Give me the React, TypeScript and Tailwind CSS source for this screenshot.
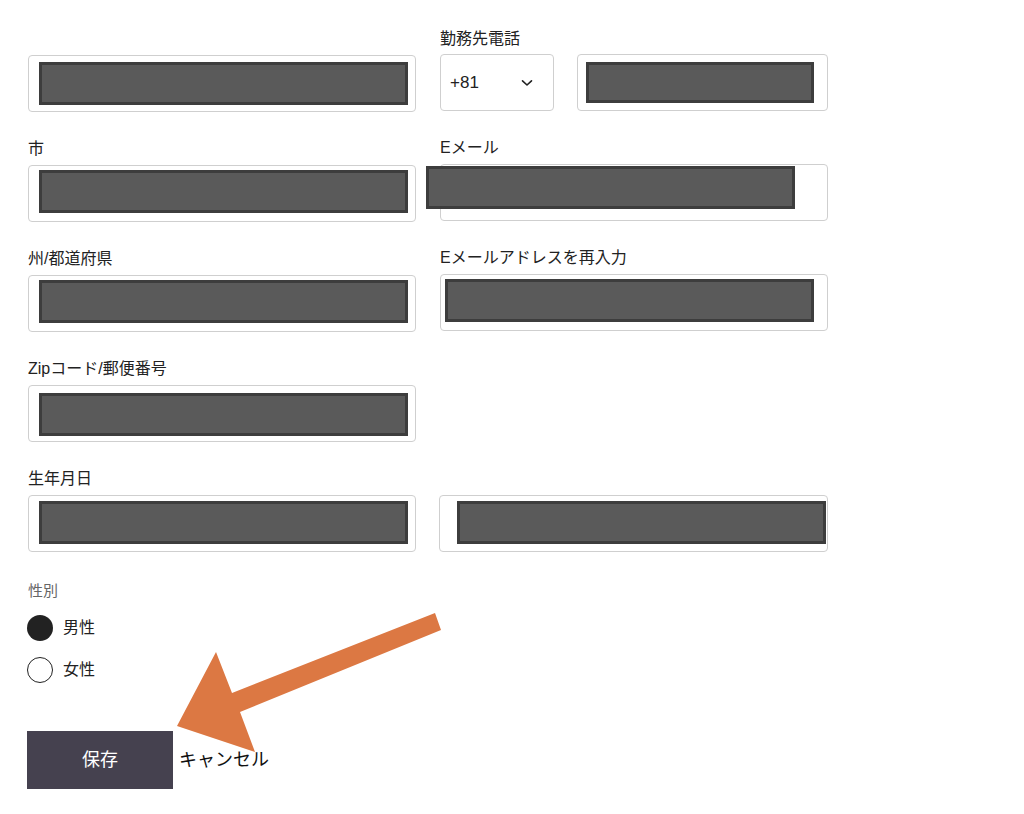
import React from "react";

// grey blocks that hide personal data in the screenshot
const Redact = ({ className }: { className: string }) => (
  <div
    className={`absolute h-[43px] w-[369px] border-[3px] border-[#3d3d3d] bg-[#5a5a5a] ${className}`}
  />
);

const Field = ({
  label,
  redact,
  className = "",
}: {
  label?: string;
  redact: string;
  className?: string;
}) => (
  <div className={`flex w-[388px] flex-col ${className}`}>
    <label className="h-[22px] text-[16px] leading-[22px] text-[#222]">
      {label ?? ""}
    </label>
    <div className="relative mt-[5px] h-[57px] rounded-[4px] border border-[#cfcfcf] bg-white">
      <Redact className={redact} />
    </div>
  </div>
);

const Radio = ({ checked, label }: { checked: boolean; label: string }) => (
  <label className="flex items-center gap-[10px]">
    <span
      className={`h-[26px] w-[26px] rounded-full ${
        checked ? "bg-[#222]" : "border-[1.5px] border-[#222] bg-white"
      }`}
    />
    <span className="text-[16px] text-[#222]">{label}</span>
  </label>
);

export default function App() {
  return (
    <div className="relative h-[814px] w-full overflow-hidden bg-white font-['Liberation_Sans','Noto_Sans_CJK_JP',sans-serif]">
      <div className="flex flex-col gap-[26px] pl-[28px] pt-[28px]">
        {/* row 1 */}
        <div className="flex gap-[24px]">
          <Field redact="left-[10px] top-[6px]" />
          <div className="flex w-[388px] flex-col">
            <label className="h-[22px] text-[16px] leading-[22px] text-[#222]">
              勤務先電話
            </label>
            <div className="-mt-[1px] flex gap-[23px] pt-[5px]">
              <div className="flex h-[57px] w-[114px] items-center justify-between rounded-[4px] border border-[#cfcfcf] bg-white pl-[9px] pr-[20px]">
                <span className="text-[17px] text-[#222]">+81</span>
                <svg width="12" height="8" viewBox="0 0 12 8" fill="none">
                  <path
                    d="M1.5 1.8 6 6 10.5 1.8"
                    stroke="#222"
                    strokeWidth="1.6"
                    strokeLinecap="round"
                    strokeLinejoin="round"
                  />
                </svg>
              </div>
              <div className="relative h-[57px] flex-1 rounded-[4px] border border-[#cfcfcf] bg-white">
                <div className="absolute left-[8px] top-[7px] h-[41px] w-[228px] border-[3px] border-[#3d3d3d] bg-[#5a5a5a]" />
              </div>
            </div>
          </div>
        </div>

        {/* row 2 */}
        <div className="flex gap-[24px]">
          <Field label="市" redact="left-[10px] top-[4px]" />
          <Field label="Eメール" redact="left-[-15px] top-[1px]" className="-mt-[1px]" />
        </div>

        {/* row 3 */}
        <div className="flex gap-[24px]">
          <Field label="州/都道府県" redact="left-[10px] top-[4px]" />
          <Field label="Eメールアドレスを再入力" redact="left-[4px] top-[4px]" className="-mt-[1px]" />
        </div>

        {/* row 4 */}
        <div className="flex gap-[24px]">
          <Field label="Zipコード/郵便番号" redact="left-[10px] top-[7px]" />
        </div>

        {/* row 5 */}
        <div className="flex gap-[23px]">
          <Field label="生年月日" redact="left-[10px] top-[5px]" />
          <Field redact="left-[17px] top-[5px]" className="w-[389px]" />
        </div>
      </div>

      <div className="mt-[28px] pl-[27px]">
        <div className="pl-[1px] text-[15px] leading-[22px] text-[#666]">性別</div>
        <div className="mt-[13px] flex flex-col gap-[16px]">
          <Radio checked label="男性" />
          <Radio checked={false} label="女性" />
        </div>
        <div className="mt-[48px] flex items-center gap-[6px]">
          <button className="h-[58px] w-[146px] bg-[#45414f] text-[18px] text-white">
            保存
          </button>
          <span className="text-[18px] text-[#111]">キャンセル</span>
        </div>
      </div>

      {/* annotation arrow */}
      <svg
        className="pointer-events-none absolute left-0 top-0"
        width="1024"
        height="814"
        viewBox="0 0 1024 814"
      >
        <polygon
          points="435,613 441,630 240,712 255,752 177,726 216,652 232,693"
          fill="#dc7843"
        />
      </svg>
    </div>
  );
}
